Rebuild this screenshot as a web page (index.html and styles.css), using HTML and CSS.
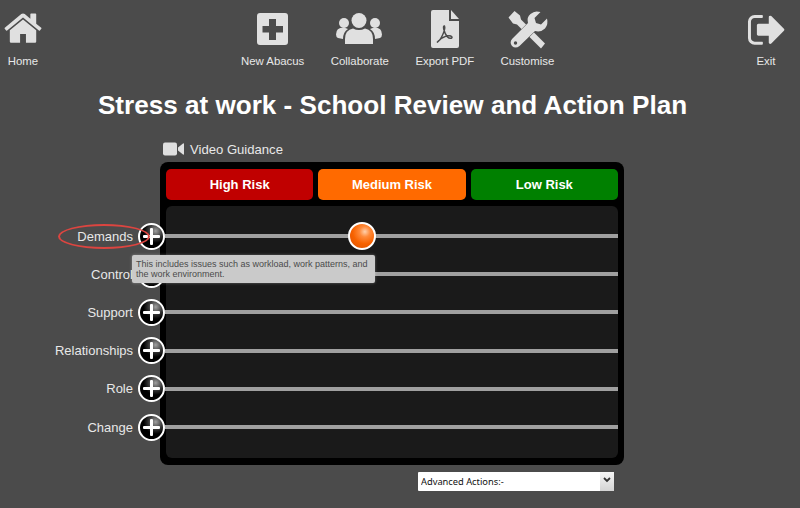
FILE: index.html
```html
<!DOCTYPE html>
<html lang="en">
<head>
<meta charset="utf-8">
<title>Stress at work</title>
<link rel="stylesheet" href="styles.css">
</head>
<body>
<nav class="nav">
  <a class="nav-item home">
    <svg class="icon" width="46" height="50" viewBox="0 0 46 50"><g transform="translate(2.5 7.7) scale(.0229)"><path d="M1472 992v480q0 26-19 45t-45 19h-384v-384h-256v384h-384q-26 0-45-19t-19-45v-480q0-1 .5-3t.5-3l575-474 575 474q1 2 1 6zm223-69l-62 74q-8 9-21 11h-3q-13 0-21-7l-692-577-692 577q-12 8-24 7-13-2-21-11l-62-74q-8-10-7-23.500t11-21.500l719-599q32-26 76-26t76 26l244 204v-195q0-14 9-23t23-9h192q14 0 23 9t9 23v408l219 182q10 8 11 21.500t-7 23.500z"/></g></svg>
    <span>Home</span>
  </a>
  <div class="nav-group">
    <a class="nav-item">
      <svg class="icon" width="63" height="50" viewBox="241 0 63 50"><path fill-rule="evenodd" d="M260 13h25q3 0 3 3v26q0 3-3 3h-25q-3 0-3-3V16q0-3 3-3zM269 19v7h-6.500v6.500h6.500V40h7v-7.500h7V26h-7v-7z"/></svg>
      <span>New Abacus</span>
    </a>
    <a class="nav-item">
      <svg class="icon" width="59" height="50" viewBox="330 0 59 50"><circle cx="359" cy="20.500" r="7.500"/><circle cx="344" cy="23" r="5"/><circle cx="375" cy="23" r="5"/><path d="M345 44v-5q0-9 8-10.500 6 3 12 0 8 1.500 8 10.500v5z"/><path d="M343 39q0-7 5-10-3-1.500-4.500-1.500-7.500 0-7.500 7 0 2.500 2 3.500z"/><path d="M375 39q0-7-5-10 3-1.500 4.500-1.500 7.500 0 7.500 7 0 2.500-2 3.500z"/></svg>
      <span>Collaborate</span>
    </a>
    <a class="nav-item">
      <svg class="icon" width="59" height="50" viewBox="415 0 59 50"><path d="M433 10h16v11h10v25q0 2-2 2h-24q-2 0-2-2V12q0-2 2-2z"/><path d="M451 10l8 9h-8z"/><path class="acrobat" d="M437 42.500C441 40 446 29 444.500 26c-2-1-1 6 3 11 2 2 5 1.500 4.500 0-2-2.500-10-1-15 5.500z"/></svg>
      <span>Export PDF</span>
    </a>
    <a class="nav-item">
      <svg class="icon" width="54" height="50" viewBox="498.500 0 54 50"><path d="M513 11l5.500 4.500 1 4 24 24-4 5-24-24-4-1-4.500-6z"/><path class="gap" d="M511 46l26-26"/><path d="M535 11.500q2.500 0 4 .5l-6 6 1.500 5 5 1.500 6-6q1.500 6-2 10-4 4-10 2.500L518 46q-4 3-7.500 0-3-4 .5-7.500L526.500 23Q525 17 529 14q3-2.500 6-2.500z"/><circle class="hole" cx="514" cy="43" r="1.700"/></svg>
      <span>Customise</span>
    </a>
  </div>
  <a class="nav-item exit">
    <svg class="icon" width="40" height="50" viewBox="746 0 40 50"><g transform="translate(746.500 9) scale(.0232 .0232)"><path d="M704 1440q0 4 1 20t.5 26.500-3 23.500-10 19.500-20.500 6.500h-320q-119 0-203.500-84.500t-84.500-203.500v-704q0-119 84.500-203.500t203.500-84.500h320q13 0 22.500 9.500t9.500 22.500q0 4 1 20t.5 26.500-3 23.500-10 19.500-20.500 6.500h-320q-66 0-113 47t-47 113v704q0 66 47 113t113 47h312l11.500 1 11.500 3 8 5.500 7 9 2 13.500zm928-544q0 26-19 45l-544 544q-19 19-45 19t-45-19-19-45v-288h-448q-26 0-45-19t-19-45v-384q0-26 19-45t45-19h448v-288q0-26 19-45t45-19 45 19l544 544q19 19 19 45z"/></g></svg>
    <span>Exit</span>
  </a>
</nav>

<h1 class="title">Stress at work - School Review and Action Plan</h1>

<a class="video">
  <svg class="video-icon" width="21" height="14" viewBox="0 0 21 14"><rect x="0" y="0.500" width="14" height="13" rx="2"/><path d="M15 5.500L20 1.500q1-.5 1 .5v10q0 1-1 .5L15 8.500z"/></svg>
  <span>Video Guidance</span>
</a>

<section class="board">
  <div class="risks">
    <div class="risk high">High Risk</div>
    <div class="risk medium">Medium Risk</div>
    <div class="risk low">Low Risk</div>
  </div>
  <div class="inner">
    <div class="row">
      <div class="head">
        <span class="label">Demands</span>
        <button class="plus"></button>
        <span class="ring"></span>
        <div class="tip">This includes issues such as workload, work patterns, and the work environment.</div>
      </div>
      <div class="track"><span class="knob"></span></div>
    </div>
    <div class="row">
      <div class="head"><span class="label">Control</span><button class="plus"></button></div>
      <div class="track"></div>
    </div>
    <div class="row">
      <div class="head"><span class="label">Support</span><button class="plus"></button></div>
      <div class="track"></div>
    </div>
    <div class="row">
      <div class="head"><span class="label">Relationships</span><button class="plus"></button></div>
      <div class="track"></div>
    </div>
    <div class="row">
      <div class="head"><span class="label">Role</span><button class="plus"></button></div>
      <div class="track"></div>
    </div>
    <div class="row">
      <div class="head"><span class="label">Change</span><button class="plus"></button></div>
      <div class="track"></div>
    </div>
  </div>
</section>

<div class="actions">
  <select class="select"><option>Advanced Actions:-</option></select>
  <span class="arrow"><svg width="8" height="6" viewBox="0 0 8 6"><path d="M1 1l3 3 3-3" fill="none" stroke="#333" stroke-width="1.800"/></svg></span>
</div>
</body>
</html>
```

FILE: styles.css
```css
* { box-sizing: border-box; }
html, body { margin: 0; height: 508px; overflow: hidden; }
body {
  background: #4b4b4b;
  font-family: "Liberation Sans", Arial, sans-serif;
  color: #e8e8e8;
}
.nav { display: flex; height: 76px; }
.nav-group { display: flex; gap: 26px; margin-left: 195px; }
.nav-item { display: flex; flex-direction: column; align-items: center; font-size: 11.400px; line-height: 14px; }
.nav-item span { margin-top: 4px; }
.icon { display: block; fill: #e0e0e0; }
.home { width: 46px; }
.exit { width: 40px; margin-left: auto; margin-right: 14px; }
.acrobat { fill: none; stroke: #4b4b4b; stroke-width: 1.4; }
.gap { fill: none; stroke: #4b4b4b; stroke-width: 11; }
.hole { fill: #4b4b4b; }
.title {
  margin: 14px 0 0;
  padding-right: 15px;
  text-align: center;
  font-size: 26.100px;
  line-height: 30px;
  color: #fff;
}
.video {
  display: flex;
  align-items: center;
  gap: 6px;
  margin: 19px 0 0 163px;
  height: 20px;
  font-size: 13.100px;
}
.video-icon { fill: #e0e0e0; }
.board {
  width: 464px;
  margin: 3px 0 0 160px;
  padding: 7px 6px;
  background: #000;
  border-radius: 8px;
}
.risks { display: flex; gap: 5px; }
.risk {
  flex: 1;
  height: 31px;
  line-height: 31px;
  border-radius: 5px;
  text-align: center;
  font-size: 13px;
  font-weight: bold;
  color: #fff;
}
.high { background: #c00000; }
.medium { background: #ff6a00; }
.low { background: #008000; }
.inner {
  margin-top: 6px;
  height: 252px;
  padding: 11px 0 12px;
  background: #1a1a1a;
  border-radius: 6px;
}
.row { display: flex; align-items: center; height: 38.200px; }
.head {
  position: relative;
  flex: none;
  display: flex;
  align-items: center;
  justify-content: flex-end;
  gap: 5px;
  width: 165px;
  margin-left: -166px;
}
.label { font-size: 13px; color: #e8e8e8; white-space: nowrap; }
.plus {
  position: relative;
  flex: none;
  width: 27px;
  height: 27px;
  padding: 0;
  border: 2px solid #fff;
  border-radius: 50%;
  background: radial-gradient(circle at 68% 26%, #a0a0a0 0, #333 32%, #000 52%);
}
.plus::before, .plus::after { content: ""; position: absolute; background: #fff; border-radius: 1px; }
.plus::before { left: 3px; right: 3px; top: 10px; height: 3px; }
.plus::after { top: 3px; bottom: 3px; left: 10px; width: 3px; }
.track { position: relative; flex: 1; height: 4px; background: #a0a0a0; }
.knob {
  position: absolute;
  left: 183px;
  top: -12px;
  width: 28px;
  height: 28px;
  border: 2px solid #fff;
  border-radius: 50%;
  background: radial-gradient(circle at 62% 32%, #ffd0ac 0, #ff8a3a 24%, #f76200 55%, #d94f00 100%);
}
.ring {
  position: absolute;
  left: 58px;
  top: 1px;
  width: 92px;
  height: 25px;
  border: 2.500px solid #dc4540;
  border-radius: 50%;
}
.tip {
  position: absolute;
  z-index: 2;
  left: 132px;
  top: 32px;
  width: 243px;
  height: 28px;
  padding: 4px 4px;
  background: #cacaca;
  border-radius: 2px;
  box-shadow: 0 0 3px rgba(255,255,255,.35);
  font-size: 9px;
  line-height: 10px;
  color: #4a4a4a;
}
.actions { position: relative; width: 196px; height: 19px; margin: 7px 0 0 418px; }
.select {
  display: block;
  width: 100%;
  height: 100%;
  padding: 0 14px 0 3px;
  border: 0;
  border-radius: 1px;
  appearance: none;
  background: #fff;
  font-family: "Noto Sans", sans-serif;
  font-size: 9.300px;
  color: #111;
}
.arrow {
  position: absolute;
  right: 0;
  top: 0;
  bottom: 0;
  width: 14px;
  display: flex;
  justify-content: center;
  padding-top: 5px;
  background: linear-gradient(#f6f6f6, #d4d4d4);
  pointer-events: none;
}
.arrow svg { display: block; }
```
